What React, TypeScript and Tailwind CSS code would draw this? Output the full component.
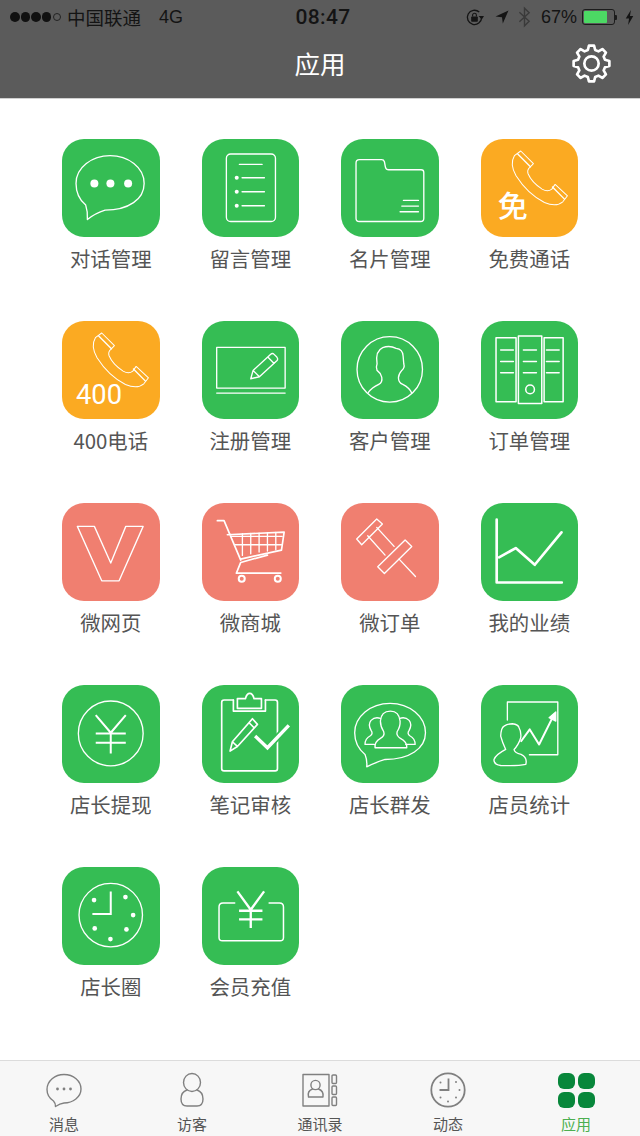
import React from "react";

const GREEN = "bg-[#35bd54]";
const ORANGE = "bg-[#fbaa22]";
const SALMON = "bg-[#f07f70]";
const CJK = "font-['Noto_Sans_CJK_SC','Noto_Sans',sans-serif]";

function Svg({ children, sw = 3.5 }: { children: React.ReactNode; sw?: number }) {
  return (
    <svg viewBox="0 0 292 292" className="h-full w-full" fill="none" stroke="#fff" strokeWidth={sw} strokeLinecap="round" strokeLinejoin="round">
      {children}
    </svg>
  );
}

const Dots = ({ pts, r }: { pts: number[][]; r: number }) => (
  <g fill="#fff" stroke="none">
    {pts.map(([x, y], i) => (
      <circle key={i} cx={x} cy={y} r={r} />
    ))}
  </g>
);

const Phone = () => (
  <>
    <path d="M119 36 L157 74 L147 84 Q137 92 141 104 Q152 130 183 150 Q200 160 212 150 L222 136 L259 170 L245 188 Q225 205 190 190 Q140 165 105 110 Q85 75 100 50 Z" />
    <path d="M110 45 L148 83 M214 144 L250 180" strokeWidth="4" />
  </>
);

const icons: Record<string, React.ReactNode> = {
  chat: (
    <Svg sw={4}>
      <path d="M71 198 C50 180 42 155 42 133 C42 85 90 50 144 50 C198 50 246 85 246 133 C246 180 200 213 129 213 Q100 222 76 241 Q78 220 71 198 Z" />
      <Dots r={12} pts={[[97, 133], [145, 133], [198, 133]]} />
    </Svg>
  ),
  list: (
    <Svg sw={4}>
      <rect x="73" y="45" width="147" height="202" rx="13" />
      <path d="M112 76 H180 M120 116 H187 M120 158 H187 M120 200 H187" />
      <Dots r={6} pts={[[104, 116], [104, 158], [104, 200]]} />
    </Svg>
  ),
  folder: (
    <Svg sw={4}>
      <path d="M45 72 Q45 62 55 62 H122 Q128 62 130 68 L133 84 Q135 92 143 92 H240 Q248 92 248 100 V237 Q248 247 238 247 H55 Q45 247 45 237 Z" />
      <path d="M187 184 H232 M182 201 H232 M177 218 H232" />
    </Svg>
  ),
  free: (
    <Svg sw={3}>
      <Phone />
      <text x="50" y="234" fontSize="90" fill="#fff" stroke="none" fontFamily="'Noto Sans CJK SC',sans-serif" fontWeight="500">免</text>
    </Svg>
  ),
  phone400: (
    <Svg sw={3}>
      <Phone />
      <text x="42" y="248" fontSize="84" textLength="138" lengthAdjust="spacingAndGlyphs" fill="#fff" stroke="none" fontFamily="'Roboto',sans-serif">400</text>
    </Svg>
  ),
  board: (
    <Svg sw={4}>
      <rect x="44" y="79" width="205" height="122" />
      <path d="M44 216 H249" />
      <path d="M146 173 L153 148 L205 100 Q211 95 216 100 L224 108 Q229 114 224 119 L172 167 Z M197 108 L216 127 M153 148 L172 167" />
    </Svg>
  ),
  person: (
    <Svg sw={4}>
      <circle cx="146" cy="145" r="98" />
      <path d="M82 214 Q92 200 113 190 Q125 184 122 168 Q118 155 108 148 Q104 138 108 128 Q102 90 125 80 Q145 72 165 82 Q185 84 186 105 L188 128 Q192 140 182 148 Q172 160 172 170 Q172 185 185 190 Q205 200 212 216" />
    </Svg>
  ),
  binders: (
    <Svg sw={4.5}>
      <rect x="45" y="50" width="60" height="192" />
      <rect x="112" y="45" width="70" height="202" />
      <rect x="189" y="50" width="57" height="192" />
      <path d="M59 87 H97 M59 121 H97 M59 155 H97 M127 87 H166 M127 121 H166 M127 155 H166 M196 87 H234 M196 121 H234 M196 155 H234" />
      <circle cx="147" cy="205" r="13" />
    </Svg>
  ),
  v: (
    <Svg sw={4}>
      <path d="M46 70 H97 L146 180 L191 70 H243 L171 233 H119 Z" />
    </Svg>
  ),
  cart: (
    <Svg sw={5}>
      <path d="M46 53 H66 L116 171 M76 95 L246 87 L238 141 L116 168 M196 156 L116 178 L103 210 H236" />
      <path d="M86 100 H240 M100 125 H238 M121 92 V157 M146 91 V152 M171 90 V147 M196 89 V144 M221 88 V140" strokeWidth="4" />
      <circle cx="119" cy="227" r="9" strokeWidth="6" />
      <circle cx="227" cy="227" r="9" strokeWidth="6" />
    </Svg>
  ),
  pin: (
    <Svg sw={4}>
      <path d="M107 48 L124 63 L62 125 L47 108 Z M192 111 L212 130 L130 211 L110 191 Z" />
      <path d="M80 98 L132 156 M107 73 L159 130 M174 168 L223 220" />
    </Svg>
  ),
  chart: (
    <Svg sw={8}>
      <path d="M47 50 V238 H242 M54 163 L104 135 L161 185 L241 88" />
    </Svg>
  ),
  yen: (
    <Svg sw={4}>
      <circle cx="146" cy="145" r="97" />
      <path d="M101 90 L146 143 L191 90 M146 143 V205 M101 145 H191 M101 173 H191" strokeWidth="6" strokeLinecap="butt" />
    </Svg>
  ),
  clipboard: (
    <Svg sw={5}>
      <path d="M94 45 H66 Q59 45 59 52 V250 Q59 257 66 257 H219 Q226 257 226 250 V52 Q226 45 219 45 H190" />
      <path d="M94 45 V78 H190 V45" />
      <path d="M106 70 V41 H130 Q134 25 143 25 Q152 25 156 41 H178 V70 Z" />
      <path d="M84 198 L91 170 L151 101 L166 118 L106 184 Z M91 170 L106 184 M141 113 L156 128" />
      <path d="M159 153 L196 188 L260 121" stroke="#35bd54" strokeWidth="20" strokeLinecap="butt" />
      <path d="M159 153 L196 188 L260 121" strokeWidth="10" strokeLinecap="butt" strokeLinejoin="miter" />
    </Svg>
  ),
  group: (
    <Svg sw={4}>
      <path d="M72 208 C50 190 41 166 41 143 C41 95 88 55 147 55 C206 55 253 95 253 143 C253 190 205 223 132 223 Q103 232 77 245 Q79 225 72 208 Z" />
      <path d="M102 188 H197 Q198 170 178 160 Q165 152 168 140 Q178 125 177 108 Q174 78 148 78 Q120 78 118 108 Q118 125 128 140 Q132 152 118 160 Q100 170 102 188 Z" />
      <path d="M118 100 Q102 94 90 106 Q80 118 90 136 Q97 146 88 152 Q72 160 72 178 H100 M176 100 Q192 94 204 106 Q214 118 204 136 Q197 146 206 152 Q222 160 222 178 H194" />
    </Svg>
  ),
  stats: (
    <Svg sw={4}>
      <path d="M79 105 V51 H230 V209 H145" />
      <path d="M59 153 Q60 128 69 123 Q80 116 94 116 Q112 118 114 128 Q121 140 119 158 Q112 180 99 193 Q100 203 120 208 Q140 218 134 238 Q110 243 59 241 Q37 238 39 223 Q45 208 74 193 Q64 172 59 153 Z" />
      <path d="M119 170 L146 133 L174 178 L219 88" strokeWidth="6" strokeLinecap="butt" />
      <path d="M204 98 L224 81 L224 108 Z" fill="#fff" />
    </Svg>
  ),
  clock: (
    <Svg sw={4}>
      <circle cx="146" cy="144" r="95" />
      <path d="M146 73 V141 H91" strokeWidth="6" strokeLinecap="butt" strokeLinejoin="miter" />
      <Dots r={7} pts={[[96, 99], [190, 90], [213, 144], [193, 187], [145, 216], [98, 184]]} />
    </Svg>
  ),
  recharge: (
    <Svg sw={4.5}>
      <path d="M98 108 H63 Q51 108 51 120 V211 Q51 221 61 221 H234 Q244 221 244 211 V120 Q244 108 232 108 H201" />
      <path d="M106 73 L146 128 L186 73 M146 128 V183 M111 131 H181 M111 157 H181" strokeWidth="7" strokeLinecap="butt" />
    </Svg>
  ),
};

const apps: { label: string; icon: string; bg: string }[] = [
  { label: "对话管理", icon: "chat", bg: GREEN },
  { label: "留言管理", icon: "list", bg: GREEN },
  { label: "名片管理", icon: "folder", bg: GREEN },
  { label: "免费通话", icon: "free", bg: ORANGE },
  { label: "400电话", icon: "phone400", bg: ORANGE },
  { label: "注册管理", icon: "board", bg: GREEN },
  { label: "客户管理", icon: "person", bg: GREEN },
  { label: "订单管理", icon: "binders", bg: GREEN },
  { label: "微网页", icon: "v", bg: SALMON },
  { label: "微商城", icon: "cart", bg: SALMON },
  { label: "微订单", icon: "pin", bg: SALMON },
  { label: "我的业绩", icon: "chart", bg: GREEN },
  { label: "店长提现", icon: "yen", bg: GREEN },
  { label: "笔记审核", icon: "clipboard", bg: GREEN },
  { label: "店长群发", icon: "group", bg: GREEN },
  { label: "店员统计", icon: "stats", bg: GREEN },
  { label: "店长圈", icon: "clock", bg: GREEN },
  { label: "会员充值", icon: "recharge", bg: GREEN },
];

function gearPath() {
  const cx = 19, cy = 19, teeth = 8;
  const pts: string[] = [];
  for (let i = 0; i < teeth; i++) {
    const a = (i * 2 * Math.PI) / teeth - Math.PI / 2;
    const step = (2 * Math.PI) / teeth;
    const add = (r: number, off: number) => {
      pts.push(`${(cx + r * Math.cos(a + off * step)).toFixed(2)} ${(cy + r * Math.sin(a + off * step)).toFixed(2)}`);
    };
    add(13.6, -0.34);
    add(17.6, -0.18);
    add(17.6, 0.18);
    add(13.6, 0.34);
  }
  return "M" + pts.join(" L") + " Z";
}

const TabIcon = ({ kind }: { kind: string }) => {
  if (kind === "grid") {
    return (
      <div className="grid h-[35px] w-[37px] grid-cols-2 gap-[3px]">
        {[0, 1, 2, 3].map((i) => (
          <div key={i} className="rounded-[6px] bg-[#08873b]" />
        ))}
      </div>
    );
  }
  return (
    <svg viewBox="0 0 36 36" className="h-[36px] w-[36px]" fill="none" stroke="#808080" strokeWidth="1.4" strokeLinecap="round" strokeLinejoin="round">
      {kind === "chat" && (
        <>
          <path d="M7.5 29 C3 26 1 22 1 17.5 C1 9 9 2.5 18 2.5 C27.5 2.5 35 9 35 17 C35 25 27 31 18 31 Q14 31.5 9.5 34.5 Q9.5 31 7.5 29 Z" />
          <g fill="#808080" stroke="none">
            <circle cx="11.5" cy="17" r="1.4" />
            <circle cx="18" cy="17" r="1.4" />
            <circle cx="24.5" cy="17" r="1.4" />
          </g>
        </>
      )}
      {kind === "person" && (
        <>
          <ellipse cx="18" cy="10.5" rx="8.5" ry="9" />
          <path d="M13 18 Q7 20 7 27 Q7 34 13 34 H23 Q29 34 29 27 Q29 20 23 18" />
        </>
      )}
      {kind === "book" && (
        <>
          <rect x="1" y="2.5" width="26" height="31.5" />
          <circle cx="13.5" cy="13" r="4.6" />
          <path d="M10.5 17 Q5 19 6.5 25 H21 Q22 19 16.5 17" />
          <rect x="30" y="3" width="4.5" height="8.5" rx="1" />
          <rect x="30" y="14" width="4.5" height="8.5" rx="1" />
          <rect x="30" y="25" width="4.5" height="8.5" rx="1" />
        </>
      )}
      {kind === "clock" && (
        <>
          <circle cx="18" cy="18" r="16.7" strokeWidth="1.8" />
          <path d="M18.5 6.5 V18 H9.5" strokeWidth="1.8" strokeLinecap="butt" strokeLinejoin="miter" />
          <g fill="#808080" stroke="none">
            <circle cx="10.5" cy="10.5" r="1" />
            <circle cx="26" cy="10" r="1" />
            <circle cx="29.5" cy="18" r="1" />
            <circle cx="26" cy="25.5" r="1" />
            <circle cx="18" cy="29.5" r="1" />
            <circle cx="10.5" cy="25.5" r="1" />
          </g>
        </>
      )}
    </svg>
  );
};

const tabs = [
  { label: "消息", kind: "chat" },
  { label: "访客", kind: "person" },
  { label: "通讯录", kind: "book" },
  { label: "动态", kind: "clock" },
  { label: "应用", kind: "grid" },
];

export default function App() {
  return (
    <div className={`flex h-[1136px] w-[640px] flex-col overflow-hidden bg-white ${CJK}`}>
      <header className="flex h-[99px] shrink-0 flex-col border-b border-[#d0d0d0] bg-[#5b5b5b]">
        <div className="flex h-[34px] items-center text-[#141414]">
          <div className="flex flex-1 items-center pl-[10px]">
            <div className="flex items-center gap-[1px]">
              {[0, 1, 2, 3].map((i) => (
                <span key={i} className="h-[9.5px] w-[9.5px] rounded-full bg-[#111]" />
              ))}
              <span className="ml-[1px] h-[8px] w-[8px] rounded-full border border-[#222]" />
            </div>
            <span className="ml-[6px] text-[18.5px] leading-[24px]">中国联通</span>
            <span className="ml-[18px] font-['Liberation_Sans',sans-serif] text-[18px] leading-[24px]">4G</span>
          </div>
          <span className="ml-[2px] font-['Roboto',sans-serif] text-[21px] font-medium leading-[24px] tracking-[0.3px]">08:47</span>
          <div className="flex flex-1 items-center justify-end gap-[4px] pr-[6px]">
            <svg viewBox="0 0 20 20" className="mr-[7px] h-[19px] w-[19px]" fill="none" stroke="#141414" strokeWidth="1.4">
              <path d="M17.5 10 A7.5 7.5 0 1 1 15 4.3" />
              <path d="M18.8 9 L17.5 11 L15.8 9 Z" fill="#141414" />
              <rect x="6.5" y="9" width="7" height="5.5" rx="0.8" fill="#141414" stroke="none" />
              <path d="M8 9 V7.5 A2 2 0 0 1 12 7.5 V9" strokeWidth="1.2" />
            </svg>
            <svg viewBox="0 0 14 14" className="mr-[5px] h-[14px] w-[14px]" fill="#141414">
              <path d="M13.5 0.5 L0.5 6.5 L7 7.2 L7.8 13.5 Z" />
            </svg>
            <svg viewBox="0 0 14 22" className="mr-[6px] h-[22px] w-[13px]" fill="none" stroke="#3a3a3a" strokeWidth="1.5">
              <path d="M1.5 6 L12 15.5 L7 20.5 V1.5 L12 6.5 L1.5 16" />
            </svg>
            <span className="font-['Liberation_Sans',sans-serif] text-[18px] leading-[24px]">67%</span>
            <div className="ml-[1px] flex items-center">
              <div className="h-[15.5px] w-[33px] rounded-[3px] border border-[#1c1c1c] p-[1px]">
                <div className="h-full w-[23px] rounded-[1px] bg-[#4cd964]" />
              </div>
              <span className="h-[5px] w-[2px] rounded-r-[1px] bg-[#1c1c1c]" />
            </div>
            <svg viewBox="0 0 9 16" className="ml-[4px] h-[15px] w-[9px]" fill="#141414">
              <path d="M6 0 L0.5 9 H4 L3 16 L8.5 6.5 H5 Z" />
            </svg>
          </div>
        </div>
        <div className="relative flex flex-1 items-center justify-center pb-[7px]">
          <h1 className="text-[25.5px] font-normal leading-[34px] text-white">应用</h1>
          <svg viewBox="0 0 38 38" className="absolute right-[29px] top-[10px] h-[39px] w-[39px]" fill="none" stroke="#fff" strokeWidth="2.6" strokeLinejoin="round">
            <path d={gearPath()} />
            <circle cx="19" cy="19" r="7" />
          </svg>
        </div>
      </header>

      <main className="grid flex-1 grid-cols-4 content-start auto-rows-[182px] px-[41px] pt-[40px]">
        {apps.map((a) => (
          <div key={a.label} className="flex flex-col items-center">
            <div className={`h-[97.5px] w-[97.5px] rounded-[22px] ${a.bg}`}>{icons[a.icon]}</div>
            <span className="mt-[7px] text-[20.4px] leading-[28px] text-[#555]">{a.label}</span>
          </div>
        ))}
      </main>

      <nav className="grid h-[76px] shrink-0 grid-cols-5 border-t border-[#dcdcdc] bg-[#f7f7f7]">
        {tabs.map((t, i) => (
          <div key={t.label} className="flex flex-col items-center pt-[11px]">
            <div className="flex h-[36px] items-center justify-center">
              <TabIcon kind={t.kind} />
            </div>
            <span className={`mt-[7px] text-[15px] leading-[18px] ${i === 4 ? "text-[#4caf50]" : "text-[#555]"}`}>{t.label}</span>
          </div>
        ))}
      </nav>
    </div>
  );
}
